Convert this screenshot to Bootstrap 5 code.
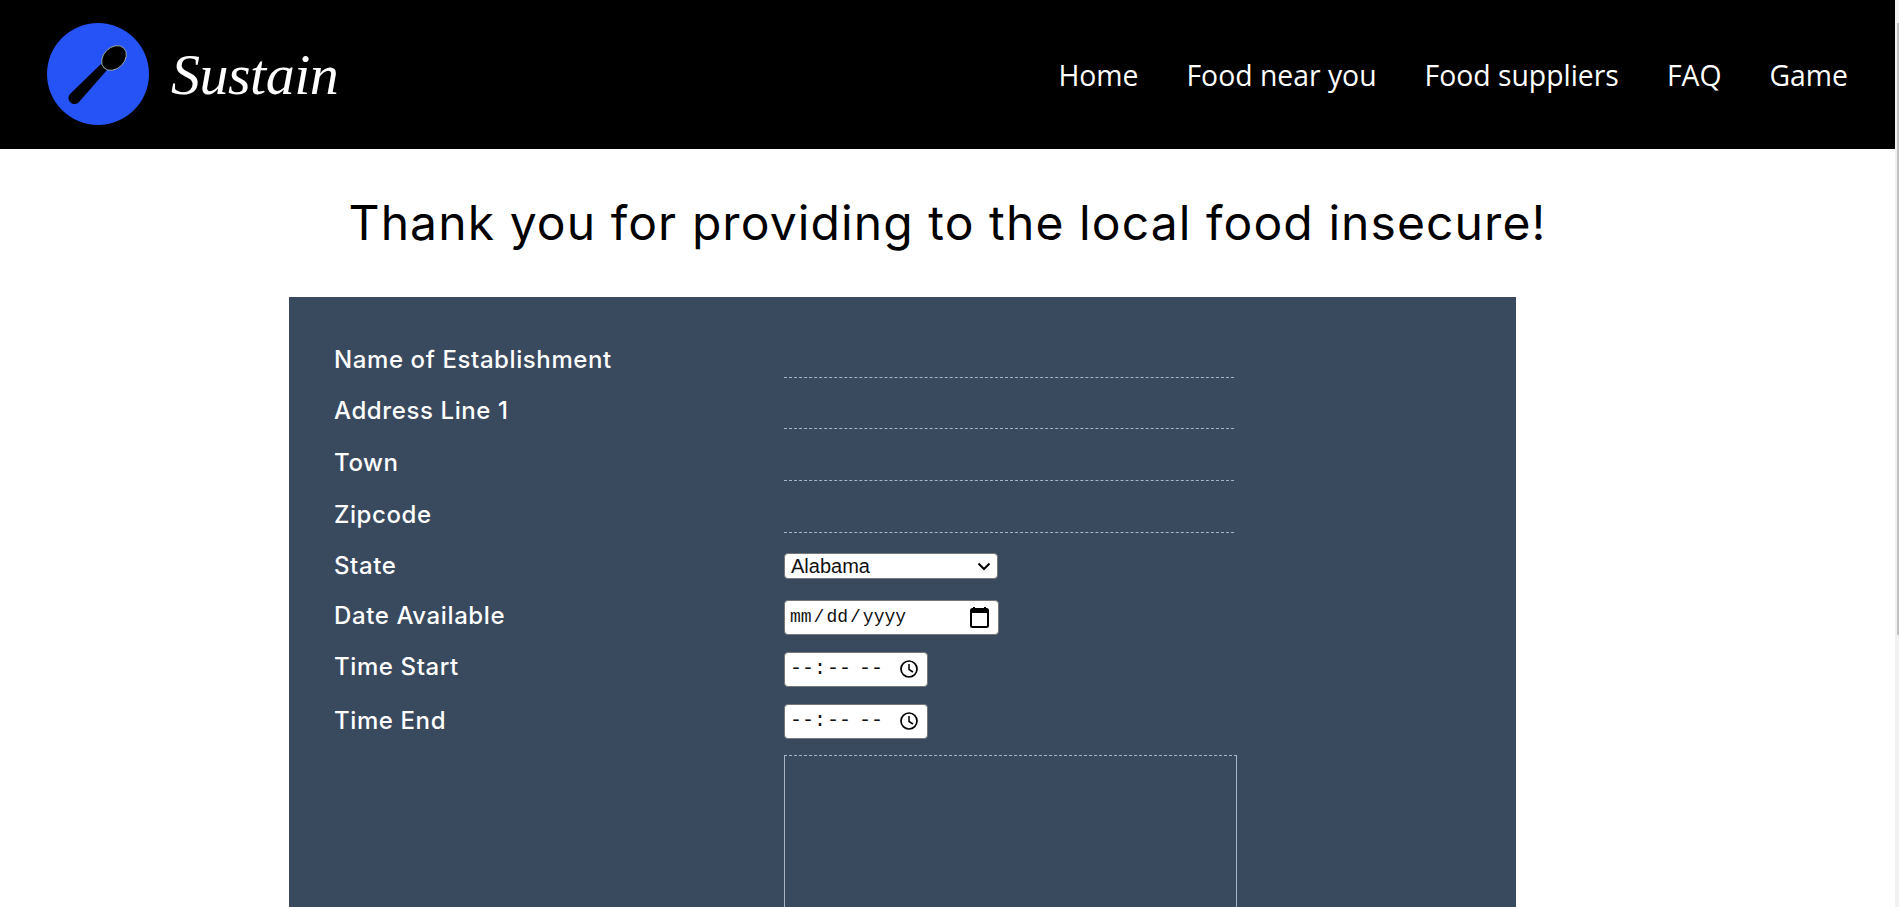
<!DOCTYPE html>
<html lang="en">

<head>
    <meta charset="utf-8">
    <meta name="viewport" content="width=device-width, initial-scale=1.0">
    <title>Sustain</title>
    <link href="https://cdn.jsdelivr.net/npm/bootstrap@5.3.0/dist/css/bootstrap.min.css" rel="stylesheet">
    <style>
        html, body {
            height: 907px;
            overflow: hidden;
        }
        .page-main {
            width: 1895px;
            height: 907px;
            overflow: hidden;
        }
        .page-scroll {
            width: 4px;
            height: 907px;
            background-color: #f1f1f1;
            padding-top: 23px;
        }
        .page-scroll div {
            width: 2px;
            height: 612px;
            margin-left: 2px;
            background-color: #c1c1c1;
        }
        .top-bar {
            height: 149px;
            background-color: #000;
            padding: 0 47px;
        }
        .logo-mark {
            margin-bottom: 1px;
        }
        .brand-name {
            font-family: "Liberation Serif", serif;
            font-style: italic;
            font-size: 58px;
            letter-spacing: -0.5px;
            line-height: 1;
            color: #fff;
            margin-left: 22px;
        }
        .top-links {
            gap: 48px;
        }
        .top-links .nav-link {
            font-family: "Open Sans", sans-serif;
            font-size: 28.35px;
            line-height: 38px;
            color: #fff;
            padding: 0;
        }
        .thanks {
            font-family: "Inter", sans-serif;
            font-size: 48px;
            font-weight: 400;
            letter-spacing: 1.1px;
            line-height: 72px;
            color: #000;
            margin: 38px 0 38px;
        }
        .supply-form {
            width: 1227px;
            margin-left: 289px;
            height: 700px;
            background-color: #39495e;
            padding: 29px 45px;
        }
        .form-line {
            height: 51.7px;
        }
        .form-line.low {
            height: 51.5px;
        }
        .form-line label {
            width: 450px;
            font-family: "Inter", sans-serif;
            font-size: 24px;
            font-weight: 500;
            letter-spacing: 0.6px;
            line-height: 36px;
            color: #fff;
            flex-shrink: 0;
        }
        .line-input {
            width: 450px;
            height: 30px;
            background: transparent;
            border: 0;
            border-bottom: 1px dashed #a9b5c4;
            color: #fff;
            outline: 0;
        }
        .gap-top {
            margin-top: 7.6px;
        }
        .gap-half {
            margin-top: 0.5px;
        }
        .state-pick {
            appearance: none;
            width: 214px;
            height: 26px;
            padding: 0 6px;
            font-family: "Liberation Sans", sans-serif;
            font-size: 20px;
            line-height: 24px;
            color: #111;
            background: #fff url("data:image/svg+xml,%3Csvg xmlns='http://www.w3.org/2000/svg' width='14' height='9' viewBox='0 0 14 9'%3E%3Cpath d='M1.5 1.5 7 7l5.500-5.500' fill='none' stroke='%23000' stroke-width='2'/%3E%3C/svg%3E") no-repeat right 6px center;
            border: 1px solid #767676;
            border-radius: 4px;
        }
        .date-pick, .time-pick {
            height: 35px;
            padding: 0 5px;
            font-family: "Liberation Mono", monospace;
            font-size: 18px;
            color: #111;
            background-color: #fff;
            border: 1px solid #767676;
            border-radius: 4px;
        }
        .date-pick::-webkit-datetime-edit-text {
            padding: 0 2px;
        }
        .date-pick::-webkit-calendar-picker-indicator {
            width: 21px;
            height: 23px;
            padding: 0;
            margin: 0 3px 0 0;
            background: url("data:image/svg+xml,%3Csvg xmlns='http://www.w3.org/2000/svg' width='21' height='23' viewBox='0 0 21 23'%3E%3Cpath d='M5 1v3M16 1v3' stroke='%23000' stroke-width='2'/%3E%3Crect x='2' y='3' width='17' height='18' rx='1.500' fill='none' stroke='%23000' stroke-width='2'/%3E%3Crect x='2' y='3' width='17' height='4' fill='%23000'/%3E%3C/svg%3E") no-repeat center;
        }
        .time-pick {
            width: 144px;
            font-size: 20px;
        }
        .time-pick::-webkit-calendar-picker-indicator {
            width: 20px;
            height: 20px;
            padding: 0;
            margin: 0 3px 0 0;
            background: url("data:image/svg+xml,%3Csvg xmlns='http://www.w3.org/2000/svg' width='20' height='20' viewBox='0 0 20 20'%3E%3Ccircle cx='10' cy='10' r='8' fill='none' stroke='%23000' stroke-width='1.700'/%3E%3Cpath d='M10 5v5.500l4 2.500' fill='none' stroke='%23000' stroke-width='1.500'/%3E%3C/svg%3E") no-repeat center;
        }
        .date-pick {
            width: 215px;
        }
        .notes {
            display: block;
            width: 453px;
            height: 300px;
            margin: 8px 0 0 450px;
            background: transparent;
            border: 1px dashed #a9b5c4;
            border-right-style: solid;
            border-left-style: solid;
            color: #fff;
            outline: 0;
        }
    </style>
</head>

<body>
<div class="d-flex">
    <div class="page-main">
        <nav class="navbar top-bar d-flex justify-content-between align-items-center flex-nowrap">
            <a class="d-flex align-items-center text-decoration-none" href="#">
                <svg class="logo-mark" width="102" height="102" viewBox="0 0 102 102">
                    <circle cx="51" cy="51" r="51" fill="#2653f5"/>
                    <path d="M54 41 L23 71 A6 6 0 0 0 32 79 L60 47 Z" fill="#000"/>
                    <ellipse cx="67" cy="35" rx="10.500" ry="14" transform="rotate(45 67 35)" fill="#000" stroke="#b4c4b2" stroke-width="0.800"/>
                </svg>
                <span class="brand-name">Sustain</span>
            </a>
            <ul class="navbar-nav flex-row top-links">
                <li class="nav-item"><a class="nav-link" href="#">Home</a></li>
                <li class="nav-item"><a class="nav-link" href="#">Food near you</a></li>
                <li class="nav-item"><a class="nav-link" href="#">Food suppliers</a></li>
                <li class="nav-item"><a class="nav-link" href="#">FAQ</a></li>
                <li class="nav-item"><a class="nav-link" href="#">Game</a></li>
            </ul>
        </nav>

        <h1 class="thanks text-center">Thank you for providing to the local food insecure!</h1>

        <form class="supply-form" onsubmit="return false;">
            <div class="form-line d-flex align-items-end">
                <label for="est">Name of Establishment</label>
                <input type="text" id="est" class="line-input">
            </div>
            <div class="form-line d-flex align-items-end">
                <label for="addr">Address Line 1</label>
                <input type="text" id="addr" class="line-input">
            </div>
            <div class="form-line d-flex align-items-end">
                <label for="town">Town</label>
                <input type="text" id="town" class="line-input">
            </div>
            <div class="form-line d-flex align-items-end">
                <label for="zip">Zipcode</label>
                <input type="text" id="zip" class="line-input">
            </div>
            <div class="form-line low d-flex align-items-center gap-top">
                <label for="state">State</label>
                <select id="state" class="state-pick">
                    <option>Alabama</option>
                    <option>Alaska</option>
                    <option>Arizona</option>
                </select>
            </div>
            <div class="form-line low d-flex align-items-center">
                <label for="day" class="mb-1">Date Available</label>
                <input type="date" id="day" class="date-pick">
            </div>
            <div class="form-line low d-flex align-items-center">
                <label for="start" class="mb-1">Time Start</label>
                <input type="time" id="start" class="time-pick">
            </div>
            <div class="form-line low d-flex align-items-center gap-half">
                <label for="end">Time End</label>
                <input type="time" id="end" class="time-pick">
            </div>
            <textarea class="notes"></textarea>
        </form>
    </div>
    <div class="page-scroll"><div></div></div>
</div>
<script src="https://cdn.jsdelivr.net/npm/bootstrap@5.3.0/dist/js/bootstrap.bundle.min.js"></script>
</body>

</html>
